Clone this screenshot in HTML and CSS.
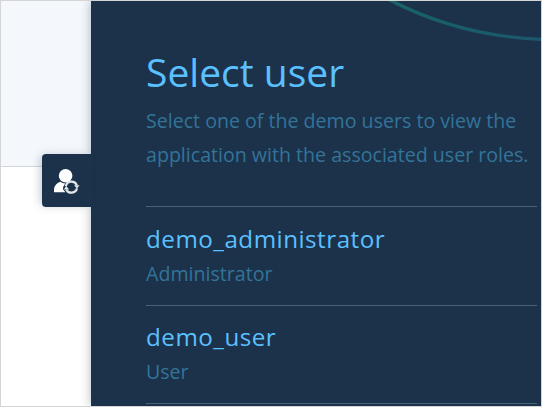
FILE: index.html
```html
<!DOCTYPE html>
<html lang="en">
<head>
<meta charset="utf-8">
<title>Select user</title>
<link rel="stylesheet" href="styles.css">
</head>
<body>
<div class="frame">
  <main class="page"><div class="page-header"></div></main>
  <aside class="panel">
    <svg class="arc" viewBox="0 0 160 50" aria-hidden="true">
      <defs><linearGradient id="arc-color" x1="0" x2="1"><stop offset="0" stop-color="#176568"/><stop offset="0.6" stop-color="#195b69"/><stop offset="1" stop-color="#1c566d"/></linearGradient></defs>
      <path d="M5 -3Q78 36 164 38.5" fill="none" stroke="url(#arc-color)" stroke-width="3.4"/>
    </svg>
    <button class="toggle" aria-label="Switch user">
      <svg class="toggle-icon" viewBox="0 0 26 26">
        <circle cx="11.6" cy="7.8" r="6.8" fill="#fff"/>
        <path d="M0 24.3V21.5Q.8 15.2 6.6 13.8Q8 15.3 11.2 15.4Q8.8 18.5 9 21.3L11.4 24.3Z" fill="#fff"/>
        <path d="M11.8 18.2A5.8 5.8 0 0 1 22.8 17.2M23 20.4A5.8 5.8 0 0 1 12.2 21.4" fill="none" stroke="#e3e7ea" stroke-width="2.2"/>
        <path d="M20 17.2H25.6L23 20.6ZM9.8 21.4L12.2 18L15.2 21.4Z" fill="#e3e7ea"/>
      </svg>
    </button>
    <h1 class="title">Select user</h1>
    <p class="intro">Select one of the demo users to view the application with the associated user roles.</p>
    <ul class="users">
      <li class="user"><span class="name">demo_administrator</span><span class="role">Administrator</span></li>
      <li class="user"><span class="name">demo_user</span><span class="role">User</span></li>
    </ul>
  </aside>
</div>
</body>
</html>
```
FILE: styles.css
```css
* { box-sizing: border-box; }
body { margin: 0; font-family: "Open Sans", "Noto Sans", sans-serif; }
.frame {
  display: flex;
  width: 542px;
  height: 407px;
  border: 1px solid #d5d5d5;
  overflow: hidden;
  background: #fff;
}
.page { width: 90px; flex: none; }
.page-header { height: 166px; background: #f4f8fd; border-bottom: 1px solid #d2d5da; }
.panel {
  position: relative;
  flex: 1;
  padding: 47px 4px 0 55px;
  background: #1c324a;
  box-shadow: 0 0 10px rgba(28, 49, 73, 0.35);
}
.arc { position: absolute; top: 0; right: 0; width: 160px; height: 50px; }
.toggle {
  position: absolute;
  top: 153px;
  left: -49px;
  display: flex;
  align-items: center;
  width: 50px;
  height: 53px;
  padding: 0 0 0 12px;
  border: 0;
  border-radius: 4px 0 0 4px;
  background: #1c324a;
  box-shadow: -3px 0 10px -2px rgba(28, 49, 73, 0.3);
}
.toggle-icon { width: 26px; height: 26px; flex: none; }
.title { margin: 0; font-size: 39px; line-height: 48px; font-weight: 400; color: #5bc0ff; }
.intro { margin: 8px 0 34px; font-size: 19.6px; line-height: 34px; color: #337499; }
.users { margin: 0; padding: 0; list-style: none; border-bottom: 1px solid #4a6078; }
.user { display: flex; flex-direction: column; height: 98px; padding-top: 14px; border-top: 1px solid #4a6078; }
.user:first-child { height: 99px; padding-top: 15px; }
.name { font-size: 24.2px; line-height: 34px; letter-spacing: 0.5px; color: #5bc0ff; }
.role { padding-top: 1px; font-size: 19.6px; line-height: 34px; color: #337499; }
```
